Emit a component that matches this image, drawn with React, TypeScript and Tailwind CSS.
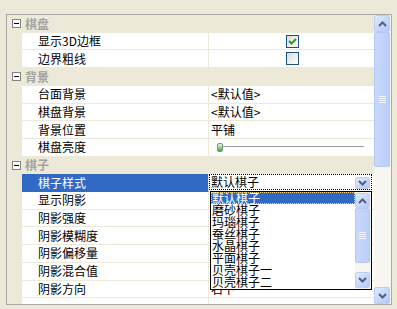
import React from "react";

const ROW_H = "h-[17.71px]";

function MinusBox() {
  return (
    <div className="w-[9px] h-[9px] border border-[#848484] bg-white flex items-center justify-center shrink-0">
      <div className="w-[5px] h-[1px] bg-black" />
    </div>
  );
}

function Category({ label }: { label: string }) {
  return (
    <div className={`${ROW_H} shrink-0 flex items-center bg-[#ECE9D8]`}>
      <div className="w-[18px] flex justify-end pr-[4px]">
        <MinusBox />
      </div>
      <span className="font-bold text-[#a3a3a3] leading-none">{label}</span>
    </div>
  );
}

function Row({
  name,
  selected,
  children,
}: {
  name: string;
  selected?: boolean;
  children?: React.ReactNode;
}) {
  return (
    <div className={`${ROW_H} shrink-0 flex bg-[#ECE9D8]`}>
      <div className="w-[15px] shrink-0" />
      <div
        className={`w-[187px] shrink-0 border-r border-[#ece9d8] flex items-center pl-[16px] ${
          selected ? "bg-[#316AC5] text-white border-b border-b-[#316AC5]" : "bg-white text-black border-b border-b-[#ece9d8]"
        }`}
      >
        <span className="leading-none">{name}</span>
      </div>
      <div className="flex-1 bg-white border-b border-[#ece9d8] relative flex items-center pl-[2px] min-w-0">
        {children}
      </div>
    </div>
  );
}

function Check({ checked }: { checked?: boolean }) {
  return (
    <div className="w-full flex justify-center">
      <div className="w-[13px] h-[13px] border border-[#1C5180] bg-gradient-to-br from-[#DCDCD7] to-[#FFFFFF] flex items-center justify-center">
        {checked && (
          <svg width="9" height="9" viewBox="0 0 9 9">
            <path d="M1 4 L3.5 6.5 L8 2" stroke="#21A121" strokeWidth="2" fill="none" />
          </svg>
        )}
      </div>
    </div>
  );
}

function Arrow({ dir, size = 9 }: { dir: "up" | "down"; size?: number }) {
  return (
    <svg width={size} height={size - 3} viewBox="0 0 9 6">
      {dir === "up" ? (
        <path d="M1 5 L4.5 1.5 L8 5" stroke="#4D6185" strokeWidth="2" fill="none" />
      ) : (
        <path d="M1 1 L4.5 4.5 L8 1" stroke="#4D6185" strokeWidth="2" fill="none" />
      )}
    </svg>
  );
}

function ScrollBtn({ dir, cls }: { dir: "up" | "down"; cls: string }) {
  return (
    <div
      className={`${cls} shrink-0 rounded-[2px] border border-[#BBCDF5] bg-gradient-to-br from-[#E1EAFE] to-[#B4C8F6] flex items-center justify-center`}
    >
      <Arrow dir={dir} />
    </div>
  );
}

function Grip() {
  return (
    <div className="flex flex-col gap-[1px]">
      <div className="w-[7px] h-[1px] bg-[#EEF4FE]" />
      <div className="w-[7px] h-[1px] bg-[#8CB0F8]" />
      <div className="w-[7px] h-[1px] bg-[#EEF4FE]" />
      <div className="w-[7px] h-[1px] bg-[#8CB0F8]" />
    </div>
  );
}

function Thumb({ cls }: { cls: string }) {
  return (
    <div
      className={`${cls} shrink-0 rounded-[2px] border border-[#B4C8F6] bg-gradient-to-r from-[#C9D8FC] to-[#BBCEFA] flex items-center justify-center`}
    >
      <div className="flex flex-col gap-[1px]">
        <div className="w-[7px] h-[1px] bg-[#F0F4FF]" />
        <div className="w-[7px] h-[1px] bg-[#F0F4FF]" />
        <div className="w-[7px] h-[1px] bg-[#F0F4FF]" />
        <div className="w-[7px] h-[1px] bg-[#F0F4FF]" />
      </div>
    </div>
  );
}

function Slider() {
  return (
    <div className="flex items-center w-full pl-[6px] pr-[10px]">
      <div className="w-[6px] h-[9px] rounded-[2px] border border-[#7A9A7A] bg-gradient-to-b from-[#F4F4F0] to-[#3DA33D] shrink-0" />
      <div className="flex-1 flex flex-col">
        <div className="h-[1px] bg-[#9D9D9D]" />
        <div className="h-[1px] bg-white" />
      </div>
    </div>
  );
}

export default function App() {
  const items = ["默认棋子", "磨砂棋子", "玛瑙棋子", "蚕丝棋子", "水晶棋子", "平面棋子", "贝壳棋子一", "贝壳棋子二"];
  return (
    <div
      className="w-[397px] h-[309px] bg-[#ECE9D8] pt-[14px] pl-[6px] text-[12px] text-black"
      style={{ fontFamily: '"Noto Sans CJK SC", "Noto Sans", sans-serif' }}
    >
      <div className="relative w-[386px] h-[291px] border border-[#A9A9A9] flex bg-[#ECE9D8]">
        <div className="w-[367px] flex flex-col overflow-hidden">
          <Category label="棋盘" />
          <Row name="显示3D边框">
            <Check checked />
          </Row>
          <Row name="边界粗线">
            <Check />
          </Row>
          <Category label="背景" />
          <Row name="台面背景">
            <span className="leading-none">&lt;默认值&gt;</span>
          </Row>
          <Row name="棋盘背景">
            <span className="leading-none">&lt;默认值&gt;</span>
          </Row>
          <Row name="背景位置">
            <span className="leading-none">平铺</span>
          </Row>
          <Row name="棋盘亮度">
            <Slider />
          </Row>
          <Category label="棋子" />
          <Row name="棋子样式" selected>
            <div className="absolute left-0 top-0 w-[163px] h-[16px] border border-dotted border-black flex items-center pl-[1px]">
              <span className="leading-none">默认棋子</span>
              <div className="absolute right-[1px] top-[2px] w-[15px] h-[12px] rounded-[2px] border border-[#BBCDF5] bg-gradient-to-br from-[#E1EAFE] to-[#B4C8F6] flex items-center justify-center">
                <Arrow dir="down" />
              </div>
            </div>
          </Row>
          <Row name="显示阴影" />
          <Row name="阴影强度" />
          <Row name="阴影模糊度" />
          <Row name="阴影偏移量" />
          <Row name="阴影混合值" />
          <Row name="阴影方向">
            <span className="leading-none">右下</span>
          </Row>
          <Row name="" />
        </div>
        <div className="w-[17px] flex flex-col bg-[#F7F6F1] pr-[1px]">
          <ScrollBtn dir="up" cls="h-[17px]" />
          <Thumb cls="h-[135px]" />
          <div className="flex-1" />
          <ScrollBtn dir="down" cls="h-[17px]" />
        </div>

        {/* dropdown list */}
        <div className="absolute left-[203px] top-[176px] w-[162px] h-[99px] border border-black bg-white flex">
          <div className="flex-1 flex flex-col">
            {items.map((it, i) => (
              <div
                key={it}
                className={`h-[12px] shrink-0 flex items-center pl-[1px] leading-none ${
                  i === 0 ? "bg-[#316AC5] text-white outline-1 outline-dotted outline-[#f7d98b] -outline-offset-1" : ""
                }`}
              >
                <span className="leading-none">{it}</span>
              </div>
            ))}
          </div>
          <div className="w-[16px] flex flex-col bg-[#F7F6F1] py-[1px] pr-[1px]">
            <ScrollBtn dir="up" cls="h-[15px]" />
            <Thumb cls="h-[55px]" />
            <div className="flex-1" />
            <ScrollBtn dir="down" cls="h-[16px]" />
          </div>
        </div>
      </div>
    </div>
  );
}
